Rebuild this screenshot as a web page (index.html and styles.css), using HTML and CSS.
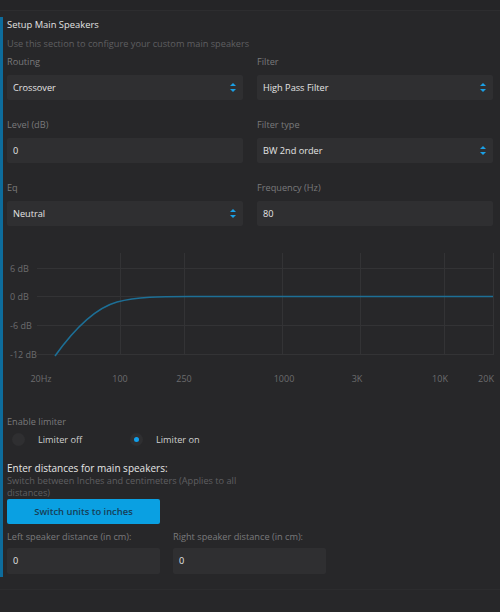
FILE: index.html
```html
<!DOCTYPE html>
<html lang="en">
<head>
    <meta charset="UTF-8">
    <meta name="viewport" content="width=device-width, initial-scale=1.0">
    <title>Setup Main Speakers</title>
    <link rel="stylesheet" href="styles.css">
</head>
<body>
    <div class="topbar"></div>
    <div class="panel">
        <h1>Setup Main Speakers</h1>
        <p class="hint">Use this section to configure your custom main speakers</p>

        <!-- Speaker settings -->
        <div class="form-grid">
            <div class="field">
                <label>Routing</label>
                <div class="select">Crossover<span class="arrows"></span></div>
            </div>
            <div class="field">
                <label>Filter</label>
                <div class="select">High Pass Filter<span class="arrows"></span></div>
            </div>
            <div class="field">
                <label>Level (dB)</label>
                <div class="input">0</div>
            </div>
            <div class="field">
                <label>Filter type</label>
                <div class="select">BW 2nd order<span class="arrows"></span></div>
            </div>
            <div class="field">
                <label>Eq</label>
                <div class="select">Neutral<span class="arrows"></span></div>
            </div>
            <div class="field">
                <label>Frequency (Hz)</label>
                <div class="input">80</div>
            </div>
        </div>

        <!-- Response chart -->
        <svg class="chart" width="493" height="150" viewBox="7 240 493 150">
            <g stroke="#333335" stroke-width="1">
                <line x1="37" y1="267.5" x2="493" y2="267.5"/>
                <line x1="37" y1="295.5" x2="493" y2="295.5"/>
                <line x1="37" y1="324.5" x2="493" y2="324.5"/>
                <line x1="37" y1="353.5" x2="493" y2="353.5"/>
                <line x1="120.5" y1="252" x2="120.5" y2="354"/>
                <line x1="184.5" y1="252" x2="184.5" y2="354"/>
                <line x1="282.5" y1="252" x2="282.5" y2="354"/>
                <line x1="360.5" y1="252" x2="360.5" y2="354"/>
                <line x1="444.5" y1="252" x2="444.5" y2="354"/>
                <line x1="493.5" y1="252" x2="493.5" y2="354"/>
            </g>
            <g class="axis" text-anchor="start">
                <text x="10" y="271">6 dB</text>
                <text x="10" y="299">0 dB</text>
                <text x="10" y="328">-6 dB</text>
                <text x="10" y="357">-12 dB</text>
            </g>
            <g class="axis" text-anchor="middle">
                <text x="41" y="381">20Hz</text>
                <text x="120" y="381">100</text>
                <text x="184" y="381">250</text>
                <text x="284" y="381">1000</text>
                <text x="357" y="381">3K</text>
                <text x="440" y="381">10K</text>
                <text x="486" y="381">20K</text>
            </g>
            <path d="M55,355 C70,334 92,308 117,301 C137,295.5 160,295.5 190,295.5 L493,295.5" fill="none" stroke="#1d6f96" stroke-width="1.6"/>
        </svg>

        <!-- Limiter -->
        <label class="group-label">Enable limiter</label>
        <div class="radios">
            <span class="radio"><span class="dot"></span>Limiter off</span>
            <span class="radio on"><span class="dot"></span>Limiter on</span>
        </div>

        <!-- Distances -->
        <h2>Enter distances for main speakers:</h2>
        <p class="hint wrap">Switch between Inches and centimeters (Applies to all distances)</p>
        <button class="units-btn">Switch units to inches</button>
        <div class="distances">
            <div class="field">
                <label>Left speaker distance (in cm):</label>
                <div class="input">0</div>
            </div>
            <div class="field">
                <label>Right speaker distance (in cm):</label>
                <div class="input">0</div>
            </div>
        </div>
    </div>
    <div class="footer"></div>
</body>
</html>
```

FILE: styles.css
```css
body {
    margin: 0;
    background: #272729;
    font-family: "Open Sans", "Noto Sans", sans-serif;
    font-size: 9.2px;
    color: #dcdcdc;
    width: 500px;
    height: 612px;
    overflow: hidden;
}
.topbar {
    height: 10px;
    background: #252527;
    border-bottom: 1px solid #2d2d2f;
}
.panel {
    margin-top: 6px;
    border-left: 3px solid #0d6c9c;
    padding: 0 7px 0 4px;
    height: 560px;
}
h1 {
    margin: 0;
    font-size: 9.4px;
    font-weight: normal;
    line-height: 15px;
    color: #e2e2e2;
}
.hint {
    margin: 5px 0 0;
    line-height: 14px;
    color: #5f5f61;
}
.form-grid {
    display: grid;
    grid-template-columns: 1fr 1fr;
    column-gap: 14px;
    row-gap: 18px;
    margin-top: 4px;
}
.field label,
.group-label {
    display: block;
    line-height: 14px;
    color: #7a7a7c;
}
.field .select,
.field .input {
    position: relative;
    margin-top: 6px;
    height: 25px;
    line-height: 25px;
    padding-left: 6px;
    background: #2f2f31;
    border-radius: 2px;
    color: #e4e4e4;
}
.arrows {
    position: absolute;
    right: 6px;
    top: 8px;
    width: 7px;
    height: 9px;
}
.arrows::before,
.arrows::after {
    content: "";
    position: absolute;
    left: 0;
    border-left: 3.5px solid transparent;
    border-right: 3.5px solid transparent;
}
.arrows::before {
    top: 0;
    border-bottom: 3.5px solid #1aa0e6;
}
.arrows::after {
    bottom: 0;
    border-top: 3.5px solid #1aa0e6;
}
.chart {
    display: block;
    margin-top: 15px;
}
.axis text {
    font-family: "Open Sans", "Noto Sans", sans-serif;
    font-size: 9px;
    fill: #6c6c6e;
}
.group-label {
    margin-top: 24px;
}
.radios {
    display: flex;
    height: 18px;
    align-items: center;
    margin-top: 1px;
    padding-left: 5px;
}
.radio {
    display: flex;
    align-items: center;
    width: 118px;
    color: #cfcfcf;
}
.radio .dot {
    position: relative;
    width: 13px;
    height: 13px;
    border-radius: 50%;
    background: #2f2f31;
    margin-right: 13px;
}
.radio.on .dot::after {
    content: "";
    position: absolute;
    left: 4px;
    top: 4px;
    width: 5px;
    height: 5px;
    border-radius: 50%;
    background: #10a0ec;
}
h2 {
    margin: 13px 0 0;
    font-size: 10px;
    font-weight: normal;
    line-height: 14px;
    color: #e6e6e6;
}
.hint.wrap {
    margin-top: 0;
    width: 240px;
    line-height: 12px;
}
.units-btn {
    display: block;
    margin-top: 0;
    width: 153px;
    height: 25px;
    border: none;
    border-radius: 2px;
    background: #0aa0e2;
    color: #173e57;
    font-family: "Open Sans", "Noto Sans", sans-serif;
    font-size: 9.4px;
    font-weight: 600;
    padding: 0;
}
.distances {
    display: flex;
    gap: 13px;
    margin-top: 6px;
}
.distances .field {
    width: 153px;
}
.distances .field .input {
    margin-top: 4px;
    height: 26px;
    line-height: 26px;
}
.footer {
    margin-top: 12px;
    border-top: 1px solid #2c2c2e;
    height: 30px;
}
```
